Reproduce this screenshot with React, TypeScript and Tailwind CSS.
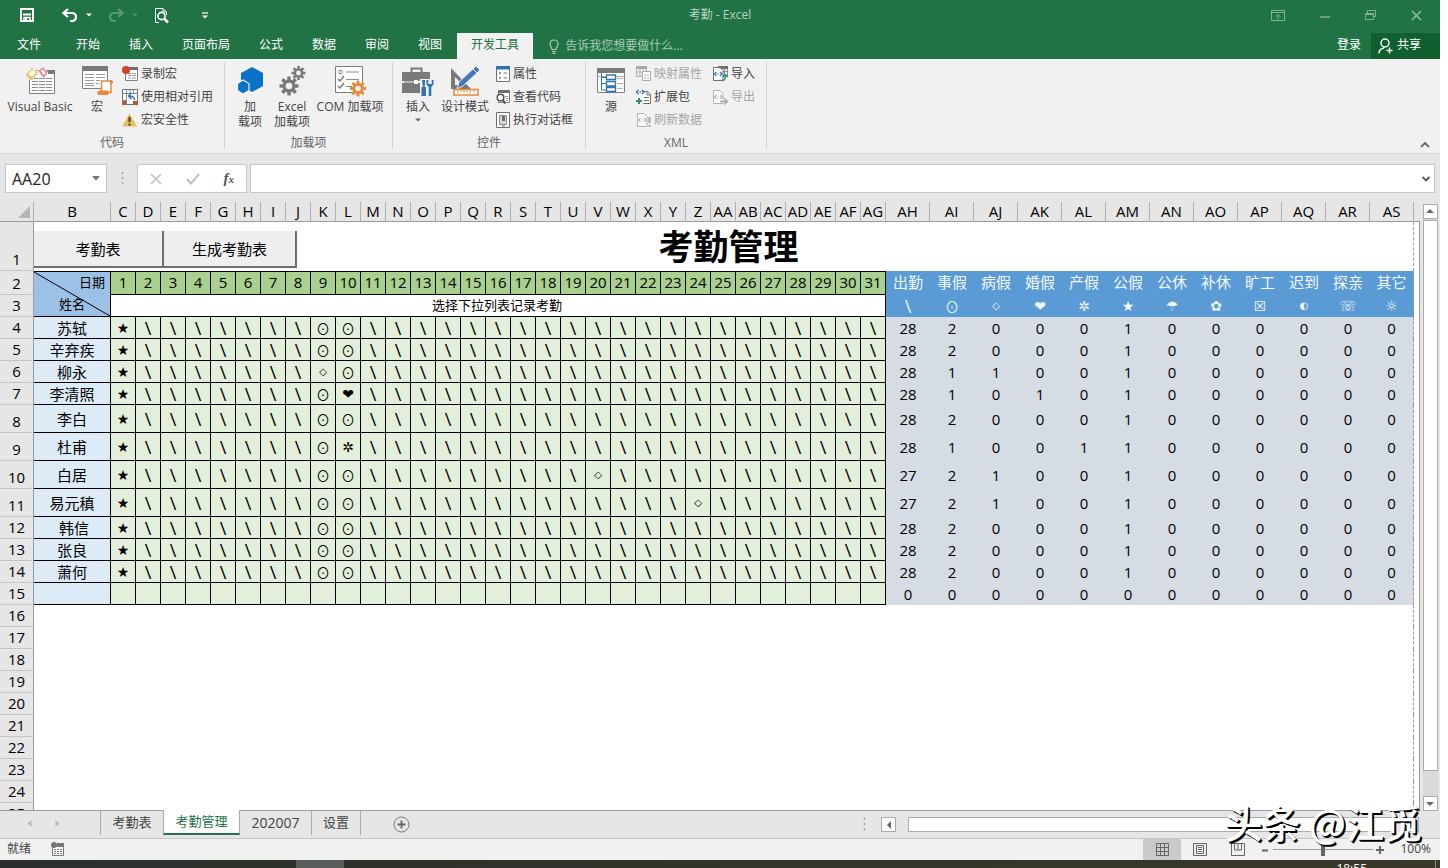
import React from "react";

const dayColumns = Array.from({ length: 31 }, (_, i) => i + 1);

const columnName = (n: number): string =>
  n < 26 ? String.fromCharCode(65 + n) : columnName(Math.floor(n / 26) - 1) + String.fromCharCode(65 + (n % 26));

const dayLetters = dayColumns.map((_, i) => columnName(i + 2));
const summaryLetters = Array.from({ length: 12 }, (_, i) => columnName(i + 33));

const summaryHeads = [
  ["出勤", "\\"],
  ["事假", "⊙"],
  ["病假", "◇"],
  ["婚假", "❤"],
  ["产假", "✲"],
  ["公假", "★"],
  ["公休", "☂"],
  ["补休", "✿"],
  ["旷工", "☒"],
  ["迟到", "◐"],
  ["探亲", "☏"],
  ["其它", "☼"],
];

type Person = { row: number; name: string; marks: Record<number, string>; totals: number[] };

const usual = { 1: "★", 9: "⊙", 10: "⊙" };

const people: Person[] = [
  { row: 4, name: "苏轼", marks: usual, totals: [28, 2, 0, 0, 0, 1] },
  { row: 5, name: "辛弃疾", marks: usual, totals: [28, 2, 0, 0, 0, 1] },
  { row: 6, name: "柳永", marks: { ...usual, 9: "◇" }, totals: [28, 1, 1, 0, 0, 1] },
  { row: 7, name: "李清照", marks: { ...usual, 10: "❤" }, totals: [28, 1, 0, 1, 0, 1] },
  { row: 8, name: "李白", marks: usual, totals: [28, 2, 0, 0, 0, 1] },
  { row: 9, name: "杜甫", marks: { ...usual, 10: "✲" }, totals: [28, 1, 0, 0, 1, 1] },
  { row: 10, name: "白居", marks: { ...usual, 20: "◇" }, totals: [27, 2, 1, 0, 0, 1] },
  { row: 11, name: "易元稹", marks: { ...usual, 24: "◇" }, totals: [27, 2, 1, 0, 0, 1] },
  { row: 12, name: "\u00a0韩信", marks: usual, totals: [28, 2, 0, 0, 0, 1] },
  { row: 13, name: "张良", marks: usual, totals: [28, 2, 0, 0, 0, 1] },
  { row: 14, name: "萧何", marks: usual, totals: [28, 2, 0, 0, 0, 1] },
];

const symbolStyle: Record<string, string> = {
  "\\": "text-[18px]",
  "◇": "font-['DejaVu_Sans',sans-serif] text-[10px]",
  "◐": "font-['DejaVu_Sans',sans-serif] text-[10px]",
  "⊙": "font-['Noto_Sans_CJK_SC',sans-serif] text-[14px]",
  "✿": "font-['DejaVu_Sans',sans-serif] text-[14px] font-bold",
};

function Mark({ value }: { value: string }) {
  return (
    <span className={`block leading-5 h-5 ${symbolStyle[value] ?? "font-['DejaVu_Sans',sans-serif] text-[14px]"}`}>{value}</span>
  );
}

/* ---------- icons ---------- */

type SvgProps = { w: number; h: number; className?: string; children: React.ReactNode };
function Svg({ w, h, className = "", children }: SvgProps) {
  return (
    <svg width={w} height={h} viewBox={`0 0 ${w} ${h}`} fill="none" aria-hidden="true" className={`shrink-0 ${className}`}>
      {children}
    </svg>
  );
}

const SaveIcon = () => (
  <Svg w={14} h={14}>
    <path d="M1 1h12v12H1z" stroke="#fff" strokeWidth="2" />
    <path d="M3 6.500h8" stroke="#fff" strokeWidth="2" />
    <path d="M4 13V9.500h6V13" stroke="#fff" strokeWidth="1.500" />
    <path d="M5 10h2v3H5z" fill="#fff" />
  </Svg>
);
const UndoIcon = ({ flip = false }: { flip?: boolean }) => (
  <Svg w={16} h={14} className={flip ? "-scale-x-100 opacity-25" : ""}>
    <path d="M6 1 1.500 5 6 9M2 5h7.500c3 0 4.500 1.500 4.500 3.800S12.500 13 9.500 13H8" stroke="#fff" strokeWidth="2.200" />
  </Svg>
);
const Caret = ({ color = "#fff" }: { color?: string }) => (
  <Svg w={6} h={4}>
    <path d="M0 .5h6L3 3.500z" fill={color} />
  </Svg>
);
const PreviewIcon = () => (
  <Svg w={16} h={17}>
    <path d="M5 15.500H1.500v-14H9l3.500 3.500v3M9 1.500V5h3.500" stroke="#fff" />
    <circle cx="7.500" cy="9" r="3.600" stroke="#fff" strokeWidth="1.600" />
    <path d="m10 11.500 4 4" stroke="#fff" strokeWidth="2.500" />
  </Svg>
);
const VbIcon = () => (
  <Svg w={32} h={28}>
    <path d="M5.500 4.500h25v23h-25z" fill="#fff" stroke="#808080" />
    <path d="M18 4h13v4H18z" fill="#7a7a7a" />
    <path d="M8 12.500h21M8 15.500h21M8 18.500h21M8 21.500h21M8 24.500h21" stroke="#8a8a8a" strokeDasharray="6 1" />
    <path d="m1 9 7-7.500L14.500 7l-7 8z" fill="#e7c46e" stroke="#f1f1f1" />
    <path d="m4 8 4.500-4.500L12 6.500 8 11z" fill="#fff7e4" />
    <path d="m14 5 5-4 5 6-4.500 5z" fill="#e2698c" stroke="#f1f1f1" />
    <path d="m16.500 5 2.500-2 3 4-2.500 2.500z" fill="#fdeef2" />
  </Svg>
);
const MacroIcon = () => (
  <Svg w={31} h={29}>
    <path d="M.5 1.500h25v21H.500z" fill="#fff" stroke="#808080" />
    <path d="M0 0h26v5H0z" fill="#7a7a7a" />
    <path d="M3 8.500h9m2 0h9M3 11.500h9m2 0h9M3 14.500h9m2 0h4M3 17.500h9m2 0h3M3 19.500h9" stroke="#9a9a9a" />
    <path d="M19.500 15H29v11.500h-9.500z" fill="#fff" stroke="#e8883a" strokeWidth="1.500" />
    <path d="M28 14.500h1.500c1.500 0 1.500 3 0 3h-1M17 25h9v3.500h-9c-1.500 0-1.500-3.500 0-3.500z" fill="#e8883a" stroke="#e8883a" />
  </Svg>
);
const RecordIcon = () => (
  <Svg w={16} h={15}>
    <path d="M3.500 2.500h12v12h-12z" fill="#fff" stroke="#808080" />
    <path d="M7 1h9v3H7z" fill="#6f6f6f" />
    <path d="M6 7.500h3m1 0h4M6 9.500h3m1 0h4M6 12h3m1 0h4" stroke="#9a9a9a" />
    <circle cx="4" cy="4" r="4" fill="#cf4227" />
  </Svg>
);
const RelativeIcon = () => (
  <Svg w={16} h={16}>
    <path d="M.5.500h15v15H.500z" fill="#fff" stroke="#6f6f6f" />
    <path d="M0 4.500h16M4.500 0v16M11.500 0v4M0 11.500h4M8 1v3" stroke="#8a8a8a" />
    <path d="M12.500 11c0-3-2-4-5.500-4M9.500 4 6.500 7l3 3" stroke="#2e74b5" strokeWidth="1.500" />
    <path d="M0 12h4v4H0zM11 12h5v4h-5z" fill="#b8533f" />
  </Svg>
);
const WarnIcon = () => (
  <Svg w={16} h={14}>
    <path d="M7.500.5 15 13.500H0z" fill="#e6bd63" />
    <path d="M7.500 4v5M7.500 10.500v2" stroke="#4a3a18" strokeWidth="2" />
  </Svg>
);
const AddinIcon = () => (
  <Svg w={27} h={29}>
    <path d="m15 1 11 6v13l-11 6-11-6V7z" fill="#0a72c8" />
    <path d="m6 14 6 3.500v7L6 28l-5.500-3.500v-7z" fill="#0a72c8" stroke="#f1f1f1" strokeWidth="1.200" />
  </Svg>
);
function Gear({ x, y, r, color }: { x: number; y: number; r: number; color: string }) {
  return (
    <g transform={`translate(${x} ${y})`}>
      {[0, 45, 90, 135].map((a) => (
        <path key={a} d={`M0 ${-r}V${r}`} stroke={color} strokeWidth={r * 0.36} transform={`rotate(${a})`} />
      ))}
      <circle r={r * 0.52} fill="#f1f1f1" stroke={color} strokeWidth={r * 0.34} />
    </g>
  );
}
const GearsIcon = () => (
  <Svg w={27} h={30}>
    <Gear x={10} y={20} r={9.500} color="#7a7a7a" />
    <Gear x={19.500} y={7} r={7} color="#7a7a7a" />
  </Svg>
);
const ComIcon = () => (
  <Svg w={32} h={31}>
    <path d="M1.500.500h27v26h-27z" fill="#fff" stroke="#7a7a7a" />
    <path d="M5 4.500h3v3H5zM12 6h13M12 13.500h13M12 20.500h6" stroke="#8a8a8a" />
    <path d="m4 13 2 2 4-5M4 20l2 2 4-5" stroke="#7a7a7a" strokeWidth="1.500" />
    <Gear x={24} y={22.500} r={8} color="#e8883a" />
  </Svg>
);
const ToolboxIcon = () => (
  <Svg w={32} h={31}>
    <path d="M9.500 6V2.500h10V6" stroke="#7a7a7a" strokeWidth="2" />
    <path d="M0 6h28v9H0zM0 17h28v10H0z" fill="#7a7a7a" />
    <path d="M2 16h12" stroke="#7a7a7a" />
    <path d="M12 14h4v4h-4z" fill="#fff" />
    <path d="M18 13h14v18H18z" fill="#f1f1f1" />
    <path d="M20 14h3v4l-.500 3H24v9h-4.500v-9h1.500l-.500-3z" fill="#3572b0" />
    <path d="M24.500 14v4.500l2.200 2.500v9h2.600v-9l2.200-2.500V14h-1.800v4h-3.400v-4z" fill="#3572b0" />
  </Svg>
);
const DesignIcon = () => (
  <Svg w={31} h={30}>
    <path d="M1 2v21h20z" fill="#7a7a7a" />
    <path d="M5 11v8h8z" fill="#f1f1f1" />
    <path d="m26 0 4 4L13 20l-6 3 2-7z" fill="#4478b8" stroke="#f1f1f1" />
    <path d="m23 3 4 4" stroke="#f1f1f1" />
    <path d="M4 23.500h24v5.500H4z" fill="#fff" stroke="#e8883a" strokeWidth="1.500" />
    <path d="M8 24v3m3-3v2m3-2v3m3-3v2m3-2v3m4-3v2" stroke="#e8883a" />
  </Svg>
);
const PropsIcon = () => (
  <Svg w={14} h={16}>
    <path d="M.5.500h13v15H.500z" fill="#fff" stroke="#6f6f6f" />
    <path d="M0 0h14v3.500H0z" fill="#2e74b5" />
    <path d="M3.500 6.500h1v1h-1zM3.500 11.500h1v1h-1zM7.500 7H11M7.500 12H11" stroke="#6f6f6f" />
  </Svg>
);
const CodeIcon = () => (
  <Svg w={14} h={16}>
    <path d="M2.500 2.500h11v11h-11z" fill="#fff" stroke="#808080" />
    <path d="M2 1h12v3H2z" fill="#6f6f6f" />
    <path d="M9 7.500h3M10 9.500h2M10 11.500h2" stroke="#9a9a9a" />
    <circle cx="4.500" cy="8.500" r="3.300" fill="#fff" stroke="#555" strokeWidth="1.500" />
    <path d="m6.500 11 3 3.500" stroke="#555" strokeWidth="2" />
  </Svg>
);
const DialogIcon = () => (
  <Svg w={14} h={16}>
    <path d="M.5.500h13v15H.500z" fill="#fff" stroke="#6f6f6f" />
    <path d="M3.500 3.500h7v9h-7z" fill="#d8d8d8" stroke="#8a8a8a" />
    <path d="M6 4h3v5H6z" fill="#6f6f6f" />
    <path d="M6 14h3" stroke="#6f6f6f" />
  </Svg>
);
const SourceIcon = () => (
  <Svg w={28} h={28}>
    <path d="M.5 3.500h27v23H.500z" fill="#fff" stroke="#808080" />
    <path d="M0 2h28v5H0z" fill="#7a7a7a" />
    <path d="M20 12.500h6M20 17.500h6M20 22.500h6M1 10.500h26" stroke="#b0b0b0" />
    <path d="M4.500 7v17H9M4.500 11.500H9M4.500 17.500H9" stroke="#2e74b5" />
    <path d="M9.500 9h9v4.500h-9zM9.500 15.500h9V20h-9zM9.500 21.500h9v4h-9z" fill="#fff" stroke="#2e74b5" strokeWidth="1.300" />
  </Svg>
);
const MapIcon = () => (
  <Svg w={15} h={15}>
    <path d="M.5 1.500h10v9H.500zM4 2v8M7 2v8M1 6h9" stroke="#b0b0b0" />
    <path d="M0 0h11v3H0z" fill="#a8a8a8" />
    <path d="M6.500 5.500h8v9h-8z" fill="#fff" stroke="#a8a8a8" />
    <path d="M8 9h2M11 9h2M8 12h2M11 12h2" stroke="#a8a8a8" />
  </Svg>
);
const ExpandIcon = () => (
  <Svg w={15} h={16}>
    <path d="M6 2.500h5.500l3 3v9H7" fill="#fff" stroke="#6f6f6f" />
    <path d="M8 8.500h5M8 11.500h5M11 3v3h3" stroke="#6f6f6f" />
    <path d="M2.500 1 .500 3l2 2M6 1l2 2-2 2M3.500 3h1.500" stroke="#2e74b5" strokeWidth="1.300" />
    <path d="M3 9v6M0 12h6" stroke="#2f8f6b" strokeWidth="2" />
  </Svg>
);
const PageCode = ({ stroke, code }: { stroke: string; code: string }) => (
  <>
    <path d="M1.500 1.500H8l3 3v10H1.500z" fill="#fff" stroke={stroke} />
    <path d="m4.500 6-2 2 2 2M8 6l2 2-2 2M5.500 8H7" stroke={code} strokeWidth="1.200" />
  </>
);
const RefreshIcon = () => (
  <Svg w={15} h={16}>
    <PageCode stroke="#b0b0b0" code="#b0b0b0" />
    <path d="M13.500 5v6M13.500 13v2" stroke="#a8a8a8" strokeWidth="2" />
  </Svg>
);
const ImportIcon = () => (
  <Svg w={16} h={16}>
    <path d="M6.500 1.500h9v8h-9zM9.500 1v8M12.500 1v8M7 5.500h8" stroke="#8a8a8a" />
    <path d="M6 0h10v3H6z" fill="#6f6f6f" />
    <PageCode stroke="#6f6f6f" code="#2e74b5" />
    <path d="M10 14.500c3 0 3.500-1.500 3.500-5M11 11l2.500-2.500L16 11" stroke="#2f8f6b" strokeWidth="1.500" />
  </Svg>
);
const ExportIcon = () => (
  <Svg w={16} h={16}>
    <PageCode stroke="#b0b0b0" code="#b0b0b0" />
    <path d="M8 12.500h7M12.500 9.500l3 3-3 3" stroke="#a8a8a8" strokeWidth="1.500" />
  </Svg>
);

/* ---------- ribbon ---------- */

function BigButton({ icon, lines, width, caret }: { icon: React.ReactNode; lines: string[]; width: string; caret?: boolean }) {
  return (
    <button type="button" className={`flex flex-col items-center text-xs leading-[15px] whitespace-nowrap ${width}`}>
      <span className="flex h-[37px] items-start justify-center pt-1">{icon}</span>
      {lines.map((l) => (
        <span key={l}>{l}</span>
      ))}
      {caret && (
        <span className="pt-1">
          <Caret color="#666" />
        </span>
      )}
    </button>
  );
}

function SmallButton({ icon, label, disabled }: { icon: React.ReactNode; label: string; disabled?: boolean }) {
  return (
    <button type="button" disabled={disabled} className="flex h-[23px] items-center gap-[3px] text-xs whitespace-nowrap disabled:text-[#a6a6a6]">
      {icon}
      {label}
    </button>
  );
}

function Group({ title, width, children }: { title: string; width: string; children: React.ReactNode }) {
  return (
    <section className={`mt-[3px] mb-1 flex shrink-0 flex-col border-r border-[#d2d2d2] ${width}`}>
      <div className="flex min-h-0 flex-1 items-start">{children}</div>
      <h2 className="text-center text-xs leading-3 text-[#666]">{title}</h2>
    </section>
  );
}

function Ribbon() {
  return (
    <div className="flex h-[95px] border-b border-[#d2d2d2] bg-[#f1f1f1] text-[#444]">
      <Group title="代码" width="w-[225px]">
        <BigButton icon={<VbIcon />} lines={["Visual Basic"]} width="w-20" />
        <BigButton icon={<MacroIcon />} lines={["宏"]} width="w-[34px]" />
        <div className="flex flex-col pl-2">
          <SmallButton icon={<RecordIcon />} label="录制宏" />
          <SmallButton icon={<RelativeIcon />} label="使用相对引用" />
          <SmallButton icon={<WarnIcon />} label="宏安全性" />
        </div>
      </Group>
      <Group title="加载项" width="w-[168px]">
        <div className="flex items-start pl-1">
          <BigButton icon={<AddinIcon />} lines={["加", "载项"]} width="w-[42px]" />
          <BigButton icon={<GearsIcon />} lines={["Excel", "加载项"]} width="w-[42px]" />
          <BigButton icon={<ComIcon />} lines={["COM 加载项"]} width="w-[74px]" />
        </div>
      </Group>
      <Group title="控件" width="w-[193px]">
        <div className="flex items-start pl-[7px]">
          <BigButton icon={<ToolboxIcon />} lines={["插入"]} width="w-9" caret />
          <BigButton icon={<DesignIcon />} lines={["设计模式"]} width="w-[58px]" />
        </div>
        <div className="flex flex-col pl-[2px]">
          <SmallButton icon={<PropsIcon />} label="属性" />
          <SmallButton icon={<CodeIcon />} label="查看代码" />
          <SmallButton icon={<DialogIcon />} label="执行对话框" />
        </div>
      </Group>
      <Group title="XML" width="w-[181px]">
        <BigButton icon={<SourceIcon />} lines={["源"]} width="w-[50px]" />
        <div className="flex flex-col">
          <SmallButton icon={<MapIcon />} label="映射属性" disabled />
          <SmallButton icon={<ExpandIcon />} label="扩展包" />
          <SmallButton icon={<RefreshIcon />} label="刷新数据" disabled />
        </div>
        <div className="flex flex-col pl-[10px]">
          <SmallButton icon={<ImportIcon />} label="导入" />
          <SmallButton icon={<ExportIcon />} label="导出" disabled />
        </div>
      </Group>
      <div className="flex flex-1 items-end justify-end pr-[10px] pb-[5px]">
        <button type="button" aria-label="折叠功能区">
          <Svg w={10} h={7}>
            <path d="m1 6 4-4 4 4" stroke="#666" strokeWidth="1.800" />
          </Svg>
        </button>
      </div>
    </div>
  );
}

function TitleBar() {
  return (
    <header className="grid h-[33px] grid-cols-[1fr_auto_1fr] items-center pb-[3px] text-xs text-[#b7d3c2]">
      <div className="flex items-center pl-5">
        <button type="button" aria-label="保存"><SaveIcon /></button>
        <button type="button" aria-label="撤消" className="ml-7 flex items-center gap-2"><UndoIcon /><Caret /></button>
        <button type="button" aria-label="恢复" className="ml-4 flex items-center gap-2">
          <UndoIcon flip />
          <Caret color="#4e8f69" />
        </button>
        <button type="button" aria-label="打印预览" className="ml-4"><PreviewIcon /></button>
        <button type="button" aria-label="自定义快速访问工具栏" className="ml-8">
          <Svg w={6} h={7}>
            <path d="M0 1h6" stroke="#fff" strokeWidth="1.200" />
            <path d="M0 3.500h6L3 6.500z" fill="#fff" />
          </Svg>
        </button>
      </div>
      <h1>考勤 - Excel</h1>
      <div className="flex items-center justify-end gap-[35px] pr-[18px]">
        <button type="button" aria-label="功能区显示选项">
          <Svg w={14} h={11}>
            <path d="M.5.500h13v10H.500zM1 2.500h12M7 9.500V5M4.500 7 7 4.500 9.500 7" stroke="#7db391" />
          </Svg>
        </button>
        <button type="button" aria-label="最小化">
          <Svg w={10} h={11}>
            <path d="M0 7h10" stroke="#7db391" strokeWidth="1.500" />
          </Svg>
        </button>
        <button type="button" aria-label="还原">
          <Svg w={11} h={11}>
            <path d="M.5 3.500h8v6h-8zM2.500 3V.500h8v6H9M.5 4.500h8" stroke="#7db391" />
          </Svg>
        </button>
        <button type="button" aria-label="关闭">
          <Svg w={11} h={11}>
            <path d="m1 1 9 9m0-9-9 9" stroke="#8fbfa1" strokeWidth="1.500" />
          </Svg>
        </button>
      </div>
    </header>
  );
}

const menuTabs = ["开始", "插入", "页面布局", "公式", "数据", "审阅", "视图", "开发工具"];

function MenuTabs() {
  return (
    <nav className="flex h-[26px] items-stretch text-xs text-white">
      <button type="button" className="w-[62px] pr-1 pb-[2px]">文件</button>
      <div className="flex gap-px">
        {menuTabs.map((t) => (
          <button
            key={t}
            type="button"
            className={`px-[14px] pb-[2px] ${t === "开发工具" ? "bg-[#f1f1f1] text-[#217346]" : ""}`}
          >
            {t}
          </button>
        ))}
      </div>
      <label className="flex items-center gap-[6px] pl-4 text-[#a6cdb5]">
        <Svg w={10} h={15}>
          <path d="M3 10.500C3 8.500 1 8 1 5a4 4 0 0 1 8 0c0 3-2 3.500-2 5.500zM3 12.500h4M3.500 14.300h3" stroke="#a6cdb5" strokeWidth="1.200" />
        </Svg>
        <input aria-label="操作说明搜索" placeholder="告诉我您想要做什么..." className="w-40 bg-transparent outline-none placeholder:text-[#a6cdb5]" />
      </label>
      <div className="ml-auto flex">
        <button type="button" className="px-[10px] pb-[2px]">登录</button>
        <button type="button" className="flex items-center gap-1 bg-[#10602f] pr-[19px] pl-[7px]">
          <Svg w={15} h={16}>
            <circle cx="7" cy="5" r="4" stroke="#fff" strokeWidth="1.400" />
            <path d="M1 15.500c0-3.500 2-5 5-5.500M8.500 12.500h6M11.500 9.500v6" stroke="#fff" strokeWidth="1.400" />
          </Svg>
          <span className="pb-[3px]">共享</span>
        </button>
      </div>
    </nav>
  );
}

const Dots = () => (
  <Svg w={3} h={13}>
    <path d="M1.500 0v13" stroke="#a0a0a0" strokeWidth="1.500" strokeDasharray="2 3" />
  </Svg>
);

function FormulaBar() {
  return (
    <div className="flex h-12 items-start pt-[10px] pr-[5px] pl-[5px]">
      <div className="flex h-[29px] w-[102px] items-center border border-[#c6c6c6] bg-white pr-[6px]">
        <input aria-label="名称框" defaultValue="AA20" className="w-full min-w-0 pl-[6px] text-base text-[#222] outline-none" />
        <button type="button" aria-label="名称列表">
          <Svg w={8} h={5}>
            <path d="M0 0h8L4 4.500z" fill="#777" />
          </Svg>
        </button>
      </div>
      <div className="flex h-[29px] w-[30px] items-center justify-center"><Dots /></div>
      <div className="mr-[3px] flex h-[29px] w-[110px] items-center justify-around border border-[#c6c6c6] bg-white">
        <button type="button" aria-label="取消">
          <Svg w={12} h={12}><path d="m1 1 10 10m0-10L1 11" stroke="#c0c0c0" strokeWidth="1.500" /></Svg>
        </button>
        <button type="button" aria-label="输入">
          <Svg w={14} h={12}><path d="m1 6 4 4.500L13 1" stroke="#c0c0c0" strokeWidth="2" /></Svg>
        </button>
        <button type="button" aria-label="插入函数" className="font-['Liberation_Serif',serif] text-[15px] leading-4 font-bold text-[#555] italic">
          f<span className="text-[11px]">x</span>
        </button>
      </div>
      <div className="flex h-[29px] flex-1 items-center border border-[#c6c6c6] bg-white pr-1">
        <input aria-label="编辑栏" className="h-full min-w-0 flex-1 px-2 text-[15px] outline-none" />
        <button type="button" aria-label="展开编辑栏">
          <Svg w={8} h={6}><path d="m.5 1 3.500 3.500L7.500 1" stroke="#555" strokeWidth="1.800" /></Svg>
        </button>
      </div>
    </div>
  );
}

/* ---------- worksheet ---------- */

const rowHeadClass = "border-r border-b border-r-[#9b9b9b] border-b-[#c4c4c4] bg-[#e6e6e6] p-0 text-center align-bottom font-normal leading-[21px]";

const RowHead = ({ n }: { n: number }) => (
  <th scope="row" className={rowHeadClass}>{n}</th>
);
const Edge = () => <td className="border-r border-[#9b9b9b] p-0" />;
const lastDash = (i: number) => (i === 11 ? "border-r border-dashed border-r-[#9b9b9b]" : "");

function PersonRow({ row, name, marks, totals }: Person) {
  const filled = name !== "";
  return (
    <tr className={row >= 8 && row <= 11 ? "h-7" : "h-[22px]"}>
      <RowHead n={row} />
      <td className="border-r border-b border-black bg-[#ddebf7] p-0">{name}</td>
      {dayColumns.map((d) => (
        <td key={d} className="border-r border-b border-black bg-[#e2efda] p-0">
          {filled && <Mark value={marks[d] ?? "\\"} />}
        </td>
      ))}
      {summaryHeads.map(([label], i) => (
        <td key={label} className={`bg-[#d6dce4] p-0 pb-px ${lastDash(i)}`}>{totals[i] ?? 0}</td>
      ))}
      <Edge />
    </tr>
  );
}

function FormButton({ children, width }: { children: React.ReactNode; width: string }) {
  return (
    <button type="button" className={`h-[37px] border-r-2 border-b-2 border-[#6e6e6e] bg-[#efefef] text-[15px] ${width}`}>
      {children}
    </button>
  );
}

function Sheet() {
  const letterClass = "border-r border-b border-r-[#b0b0b0] border-b-[#9b9b9b] p-0 font-normal";
  return (
    <table className="w-full table-fixed border-separate border-spacing-0 text-center text-[15px] leading-5 text-black">
      <colgroup>
        <col className="w-[34px]" />
        <col className="w-[77px]" />
        {dayLetters.map((l) => <col key={l} className="w-[25px]" />)}
        {summaryLetters.map((l) => <col key={l} className="w-[44px]" />)}
        <col />
      </colgroup>
      <thead className="bg-[#e6e6e6]">
        <tr className="h-5">
          <th aria-label="全选" className={letterClass}>
            <Svg w={12} h={12} className="ml-[18px]"><path d="M12 0v12H0z" fill="#b4b4b4" /></Svg>
          </th>
          {["B", ...dayLetters, ...summaryLetters].map((l) => (
            <th key={l} scope="col" className={`${letterClass} leading-[19px]`}>{l}</th>
          ))}
          <th aria-label="AT" className="border-b border-[#9b9b9b] p-0" />
        </tr>
      </thead>
      <tbody>
        <tr className="h-[49px]">
          <RowHead n={1} />
          <td colSpan={44} className="relative border-r border-dashed border-r-[#9b9b9b] bg-white p-0 pl-[10px] text-[35px] leading-[48px] font-bold">
            考勤管理
            <div className="absolute top-[9px] left-0 flex font-normal leading-5">
              <FormButton width="w-[130px]">考勤表</FormButton>
              <FormButton width="w-[133px]">生成考勤表</FormButton>
            </div>
          </td>
          <Edge />
        </tr>
        <tr className="h-6">
          <RowHead n={2} />
          <td rowSpan={2} className="relative border-y border-r border-black bg-[#9bc2e6] p-0 align-top text-[13px] leading-[22px]">
            <svg viewBox="0 0 76 44" preserveAspectRatio="none" aria-hidden="true" className="absolute inset-0 size-full">
              <path d="M0 0 76 44" stroke="#000" />
            </svg>
            <div className="pr-[5px] text-right leading-[21px]">日期</div>
            <div>姓名</div>
          </td>
          {dayColumns.map((d) => (
            <td key={d} className="border-y border-r border-black bg-[#a9d08e] p-0 align-top">{d}</td>
          ))}
          {summaryHeads.map(([label], i) => (
            <td key={label} className={`bg-[#5b9bd5] p-0 pb-[2px] text-[#f2f8ff] ${lastDash(i)}`}>{label}</td>
          ))}
          <Edge />
        </tr>
        <tr className="h-[22px]">
          <RowHead n={3} />
          <td colSpan={31} className="border-r border-b border-black p-0 pr-[2px] text-[13px] leading-[19px]">选择下拉列表记录考勤</td>
          {summaryHeads.map(([label, symbol], i) => (
            <td key={label} className={`bg-[#5b9bd5] p-0 text-[#f2f8ff] ${lastDash(i)}`}><Mark value={symbol} /></td>
          ))}
          <Edge />
        </tr>
        {people.map((p) => <PersonRow key={p.row} {...p} />)}
        <PersonRow row={15} name="" marks={{}} totals={[]} />
        {Array.from({ length: 10 }, (_, i) => (
          <tr key={i} className="h-[22px]">
            <RowHead n={16 + i} />
            <td colSpan={44} className="border-r border-dashed border-r-[#9b9b9b] bg-white p-0" />
            <Edge />
          </tr>
        ))}
      </tbody>
    </table>
  );
}

const arrowPaths = { up: "M1 6l4-4 4 4z", down: "M1 3h8L5 7z", left: "M7 1v8L3 5z", right: "M3 1v8l4-4z" };

function ScrollButton({ dir, label }: { dir: keyof typeof arrowPaths; label: string }) {
  return (
    <button type="button" aria-label={label} className="flex size-[15px] shrink-0 items-center justify-center border border-[#ababab] bg-white">
      <Svg w={10} h={10}><path d={arrowPaths[dir]} fill="#666" /></Svg>
    </button>
  );
}

function SheetTabs() {
  return (
    <div className="flex h-[27px] items-start text-[13px] text-[#444]">
      <div className="flex h-6 w-[100px] items-center gap-[23px] pl-[27px]">
        <Svg w={5} h={7}><path d="M4.500 0v7L.500 3.500z" fill="#bdbdbd" /></Svg>
        <Svg w={5} h={7}><path d="M.500 0v7l4-3.500z" fill="#bdbdbd" /></Svg>
      </div>
      <button type="button" className="h-6 w-[63px] border-l border-[#ababab] pb-px">考勤表</button>
      <button type="button" className="relative -mt-px h-[25px] w-[77px] border-x border-b-2 border-x-[#ababab] border-b-[#217346] bg-white text-[#217346]">
        考勤管理
      </button>
      <button type="button" className="h-6 w-[72px] border-r border-[#ababab] pb-px text-sm">202007</button>
      <button type="button" className="h-6 w-[49px] border-r border-[#ababab] pb-px">设置</button>
      <button type="button" aria-label="新工作表" className="ml-[32px] pt-[5px]">
        <Svg w={17} h={17}>
          <circle cx="8.500" cy="8.500" r="7.500" stroke="#777" />
          <path d="M4.500 8.500h8M8.500 4.500v8" stroke="#666" strokeWidth="1.800" />
        </Svg>
      </button>
      <div className="ml-auto flex h-[27px] w-[577px] items-center pr-[21px]">
        <Dots />
        <div className="ml-[15px] flex flex-1 items-center">
          <ScrollButton dir="left" label="向左滚动" />
          <div className="mx-3 h-[15px] flex-1 border border-[#ababab] bg-white" />
          <ScrollButton dir="right" label="向右滚动" />
        </div>
      </div>
    </div>
  );
}

function StatusBar() {
  return (
    <footer className="flex h-[22px] items-center border-t border-[#c6c6c6] bg-[#f1f1f1] pl-[7px] text-xs text-[#444]">
      <span className="pb-[2px]">就绪</span>
      <button type="button" aria-label="录制宏" className="ml-5 pb-[2px]">
        <Svg w={14} h={14}>
          <path d="M1.500 4.500h11v9h-11z" fill="#fff" stroke="#777" />
          <path d="M6 1h7v3H6z" fill="#777" />
          <path d="M3 7.500h8M3 9.500h8M3 11.500h8" stroke="#777" strokeDasharray="2 1" />
          <circle cx="3" cy="3" r="3" fill="#777" />
        </Svg>
      </button>
      <div className="ml-auto flex h-full items-center">
        <button type="button" aria-label="普通" className="flex h-full w-[38px] items-center justify-center bg-[#cacaca]">
          <Svg w={13} h={13}><path d="M.5.500h12v12H.500zM4.500 0v13M8.500 0v13M0 4.500h13M0 8.500h13" stroke="#666" /></Svg>
        </button>
        <button type="button" aria-label="页面布局" className="flex w-[38px] items-center justify-center">
          <Svg w={14} h={13}><path d="M.5.500h13v12H.500zM3.500 2.500h7v8h-7zM5 4.500h4M5 6.500h4M5 8.500h4" stroke="#666" /></Svg>
        </button>
        <button type="button" aria-label="分页预览" className="flex w-[38px] items-center justify-center">
          <Svg w={14} h={13}><path d="M.5.500h13v12H.500zM3.500 1v6h7V1M7 1v6" stroke="#666" /></Svg>
        </button>
        <button type="button" aria-label="缩小" className="ml-1 w-[10px]"><Svg w={8} h={8}><path d="M1 4.500h6" stroke="#666" strokeWidth="2" /></Svg></button>
        <input
          type="range"
          aria-label="显示比例"
          min={10}
          max={190}
          defaultValue={100}
          className="mx-[2px] h-3 w-[100px] appearance-none bg-[linear-gradient(#9b9b9b,#9b9b9b)] bg-[length:100%_1px] bg-center bg-no-repeat [&::-webkit-slider-thumb]:h-3 [&::-webkit-slider-thumb]:w-1 [&::-webkit-slider-thumb]:appearance-none [&::-webkit-slider-thumb]:bg-[#666]"
        />
        <button type="button" aria-label="放大" className="w-[10px]"><Svg w={10} h={10}><path d="M1 5h8M5 1v8" stroke="#666" strokeWidth="2" /></Svg></button>
        <button type="button" className="w-[55px] pr-[9px] pb-[2px] text-right">100%</button>
      </div>
    </footer>
  );
}

export default function App() {
  return (
    <div className="relative flex h-screen flex-col overflow-hidden bg-white pr-2 font-['Open_Sans','Noto_Sans_CJK_SC',sans-serif]">
      <div className="bg-[#217346]">
        <TitleBar />
        <MenuTabs />
      </div>
      <Ribbon />
      <div className="flex min-h-0 flex-1 flex-col bg-[#e6e6e6]">
        <FormulaBar />
        <main className="flex min-h-0 flex-1">
          <div className="min-w-0 flex-1 overflow-hidden border-b border-[#9b9b9b] bg-white">
            <Sheet />
          </div>
          <div className="flex w-5 flex-col items-center pt-[2px]">
            <ScrollButton dir="up" label="向上滚动" />
            <div className="flex w-[15px] flex-1 flex-col bg-[#dadada] pb-[25px]">
              <div className="mt-px flex-1 border border-[#ababab] bg-white" />
            </div>
            <ScrollButton dir="down" label="向下滚动" />
          </div>
        </main>
        <SheetTabs />
      </div>
      <StatusBar />
      <div className="flex h-2 shrink-0 justify-between overflow-hidden bg-linear-to-r from-[#2b302d] to-[#3a3829] text-xs text-white">
        <div className="ml-[296px] h-full w-12 bg-[#5a5e5b]" />
        <div className="flex items-start pr-1">
          <time className="pt-[3px] leading-3">18:55</time>
          <span className="ml-[68px] h-full w-px bg-[#8a8a80]" />
        </div>
      </div>
      <div className="pointer-events-none absolute right-[26px] bottom-[22px] font-['Noto_Sans_CJK_SC',sans-serif] text-[38px] leading-[48px] font-medium whitespace-nowrap text-white [text-shadow:1px_1px_0_#000,2px_2px_0_#000]">
        头条 @江觅
      </div>
    </div>
  );
}
